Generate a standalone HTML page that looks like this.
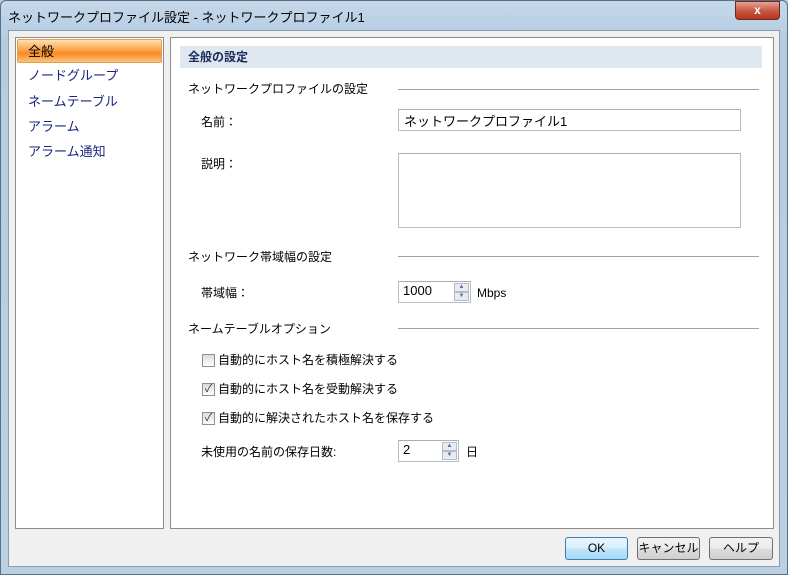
<!DOCTYPE html>
<html><head><meta charset="utf-8"><style>
*{box-sizing:border-box;margin:0;padding:0}
body{width:788px;height:575px;overflow:hidden;background:#b9cde0;font-family:"Liberation Sans","Noto Sans CJK JP",sans-serif;font-size:12px;color:#000;position:relative}
.a{position:absolute}
.frame{left:0;top:0;width:788px;height:575px;background:linear-gradient(180deg,#c6d8ea 0,#b4cbe2 40px,#bcd0e4 100%);border:1px solid #5a6e84;border-radius:6px 6px 0 0}
.client{left:8px;top:30px;width:772px;height:537px;background:#f0f0f0;border:1px solid #8a9bb0}
.panel{background:#fff;border:1px solid #8c8c8c}
.sep{height:1px;background:#a0a0a0}
.inp{background:#fff;border:1px solid #b5bcc7;border-top-color:#abadb3}
.btn{border:1px solid #707070;border-radius:3px;background:linear-gradient(#f2f2f2,#ebebeb 50%,#dddddd 51%,#cfcfcf);text-align:center;line-height:20px}
.spin{width:15px;background:#e8ecf2;border:1px solid #b5bcc7;font-size:6px;line-height:7px;text-align:center;color:#5a6a9a}
.cb{width:13px;height:13px;border:1px solid #8f8f8f;background:linear-gradient(#dcdcdc,#fff);font-size:11px;line-height:10px;text-align:center;color:#333}
</style></head><body>
<div class="a frame"></div>
<div class="a" style="left:8px;top:7px;font-size:13px;color:#000">ネットワークプロファイル設定 - ネットワークプロファイル1</div>
<div class="a" style="left:735px;top:1px;width:45px;height:19px;border:1px solid #6a2a20;border-radius:0 0 4px 4px;background:linear-gradient(#e8a393,#c85a44 50%,#b8331c);color:#fff;font-weight:bold;text-align:center;line-height:17px;font-size:12px">x</div>
<div class="a client"></div>
<div class="a panel" style="left:15px;top:37px;width:149px;height:492px"></div>
<div class="a" style="left:17px;top:39px;width:145px;height:24px;border:1px solid #e3a04a;border-radius:2px;background:linear-gradient(#fde0b0,#fb9d3f 50%,#f98a22 60%,#fcc27c)"></div>
<div class="a" style="left:28px;top:41px;font-size:13px">全般</div>
<div class="a" style="left:28px;top:65px;font-size:13px;color:#1a237e">ノードグループ</div>
<div class="a" style="left:28px;top:91px;font-size:13px;color:#1a237e">ネームテーブル</div>
<div class="a" style="left:28px;top:116px;font-size:13px;color:#1a237e">アラーム</div>
<div class="a" style="left:28px;top:141px;font-size:13px;color:#1a237e">アラーム通知</div>
<div class="a panel" style="left:170px;top:37px;width:604px;height:492px"></div>
<div class="a" style="left:180px;top:46px;width:582px;height:22px;background:#dfe8ef"></div>
<div class="a" style="left:188px;top:48px;font-weight:bold;color:#1a2a5a;font-size:12px">全般の設定</div>
<div class="a" style="left:188px;top:80px">ネットワークプロファイルの設定</div>
<div class="a sep" style="left:398px;top:89px;width:361px"></div>
<div class="a" style="left:201px;top:113px">名前：</div>
<div class="a inp" style="left:398px;top:109px;width:343px;height:22px;padding:1px 5px;font-size:13px">ネットワークプロファイル1</div>
<div class="a" style="left:201px;top:155px">説明：</div>
<div class="a inp" style="left:398px;top:153px;width:343px;height:75px"></div>
<div class="a" style="left:188px;top:248px">ネットワーク帯域幅の設定</div>
<div class="a sep" style="left:398px;top:256px;width:361px"></div>
<div class="a" style="left:201px;top:284px">帯域幅：</div>
<div class="a inp" style="left:398px;top:281px;width:73px;height:22px;padding:1px 4px;font-size:13px">1000</div>
<div class="a spin" style="left:454px;top:283px;height:9px">▲</div>
<div class="a spin" style="left:454px;top:292px;height:9px">▼</div>
<div class="a" style="left:477px;top:286px">Mbps</div>
<div class="a" style="left:188px;top:320px">ネームテーブルオプション</div>
<div class="a sep" style="left:398px;top:328px;width:361px"></div>
<div class="a cb" style="left:202px;top:354px"></div>
<div class="a" style="left:218px;top:351px">自動的にホスト名を積極解決する</div>
<div class="a cb" style="left:202px;top:383px">✓</div>
<div class="a" style="left:218px;top:380px">自動的にホスト名を受動解決する</div>
<div class="a cb" style="left:202px;top:412px">✓</div>
<div class="a" style="left:218px;top:409px">自動的に解決されたホスト名を保存する</div>
<div class="a" style="left:201px;top:443px">未使用の名前の保存日数:</div>
<div class="a inp" style="left:398px;top:440px;width:61px;height:22px;padding:1px 4px;font-size:13px">2</div>
<div class="a spin" style="left:442px;top:442px;height:9px">▲</div>
<div class="a spin" style="left:442px;top:451px;height:9px">▼</div>
<div class="a" style="left:466px;top:443px">日</div>
<div class="a btn" style="left:565px;top:537px;width:63px;height:23px;border-color:#3c7fb1;background:linear-gradient(#eaf6fd,#d9f0fc 50%,#bee6fd 51%,#a7d9f5)">OK</div>
<div class="a btn" style="left:637px;top:537px;width:63px;height:23px">キャンセル</div>
<div class="a btn" style="left:709px;top:537px;width:64px;height:23px">ヘルプ</div>
</body></html>
